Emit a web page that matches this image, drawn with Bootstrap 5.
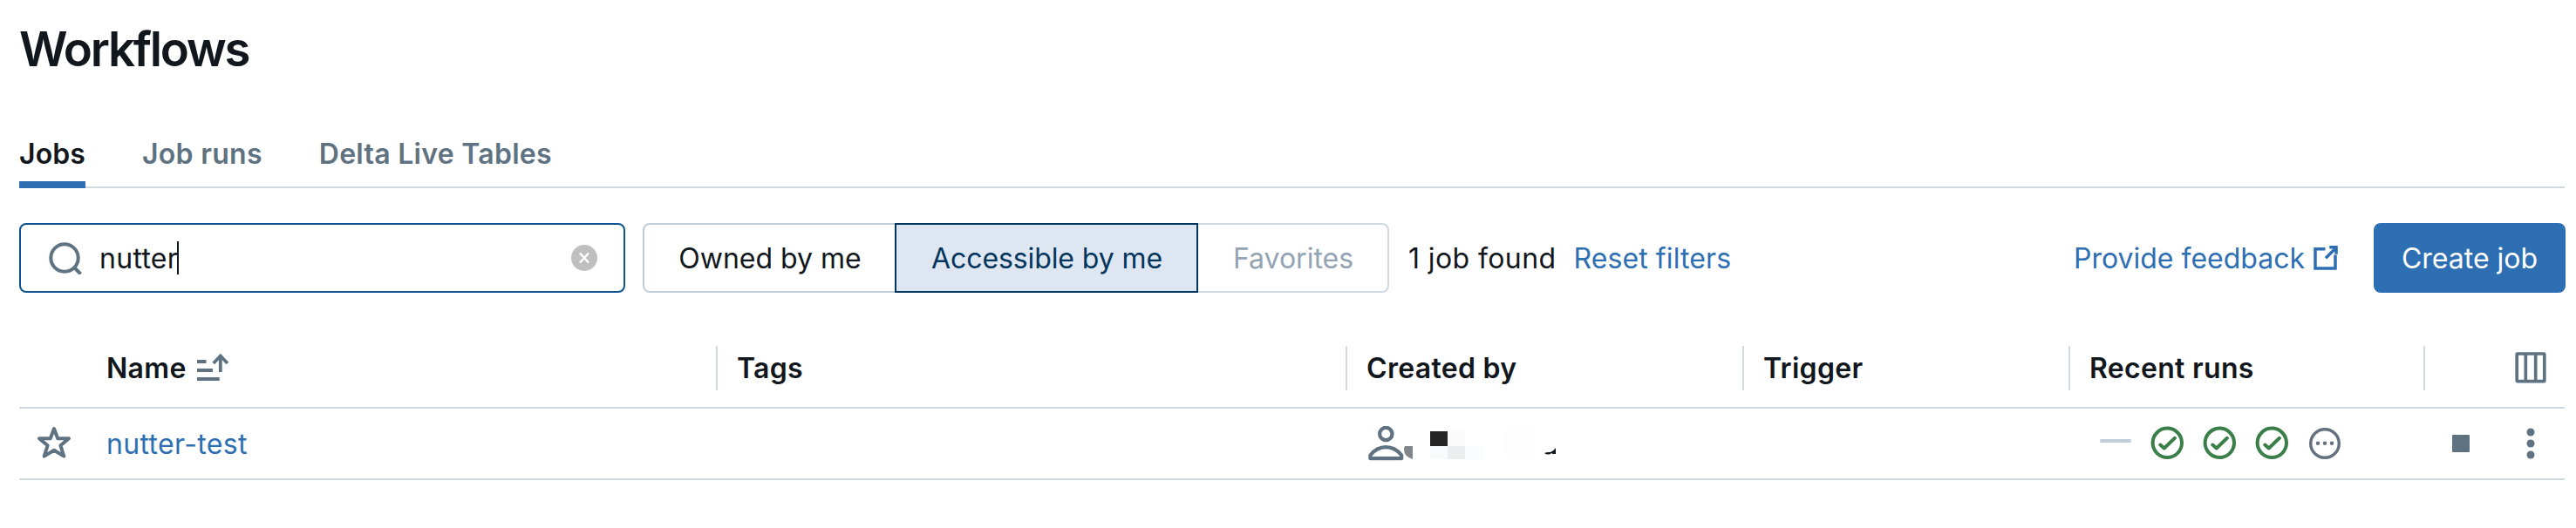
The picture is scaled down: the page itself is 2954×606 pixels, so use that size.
<!DOCTYPE html>
<html lang="en">
<head>
<meta charset="utf-8">
<title>Workflows</title>
<link rel="stylesheet" href="https://cdn.jsdelivr.net/npm/bootstrap@5.3.0/dist/css/bootstrap.min.css">
<style>
body{font-family:Inter,"Liberation Sans",sans-serif;font-size:32px;line-height:48px;color:#11171c;background:#fff;padding:0 12px 0 22px;overflow:hidden}
svg{display:block;flex:none;fill:none}
h1{font-size:54.5px;line-height:64px;font-weight:600;margin:0;padding-top:24px;letter-spacing:-2.2px}
.tabs{height:86px;margin-top:42px;border-bottom:2px solid #d1d9e1;flex-wrap:nowrap;width:2919px}
.tabs .nav-link{position:relative;padding:23px 0 0;height:86px;margin-right:65px;color:#5f7281;font-weight:600;letter-spacing:.28px}
.tabs .nav-link.active{color:#11171c;letter-spacing:.1px}
.tabs .nav-link.active::after{content:"";position:absolute;left:0;right:0;bottom:0;height:8px;background:#2e6fb4}
.tools{height:80px;margin-top:40px;width:2920px}
.search{width:695px;height:80px;border:2px solid #0e538b;border-radius:8px;padding:0 30px 0 32px}
.query{margin-left:20px;letter-spacing:.3px;padding-top:1px}
.caret{width:2px;height:38px;background:#11171c;margin-left:-1px}
.seg{margin-left:20px}
.seg .btn{height:80px;border:2px solid #c0cdd8;border-radius:8px;padding:2px 0 0 1px;font-size:32px;line-height:74px;color:#11171c;background:#fff;flex:none}
.seg .btn+.btn{margin-left:-2px!important}
.seg .owned{width:291px}
.seg .access{width:348px;letter-spacing:-.1px}
.seg .fav{width:221px;color:#93a3b3;border-color:#d1d9e1}
.seg .btn.active{background:#dee7f1;border-color:#04355d;color:#04355d}
.found{margin-left:22px;letter-spacing:.4px;padding-top:1px}
.reset{margin-left:20px;letter-spacing:.1px;padding-top:1px}
.lnk{color:#2e6fb4;text-decoration:none}
.create{width:220px;height:80px;background:#2e6fb4;border-radius:8px;color:#fff;font-size:32px;line-height:74px;padding:2px 0 0;margin-left:41px;border:0}
.jobs{display:grid;grid-template-columns:100px 701px 722px 455px 374px 407px 160px;width:2919px;border-bottom:2px solid #d1d9e1;align-items:center}
.jobs>div{display:flex;align-items:center}
.hd{height:93px;margin-top:40px;font-weight:600;letter-spacing:.3px}
.hd>div{height:51px;margin-top:1px}
.hd span{padding-top:1px}
.hd .ln{border-right:2px solid #d1d9e1}
.bd{height:82px}
.gx{padding-left:22px}
</style>
</head>
<body>
<h1>Workflows</h1>
<nav class="nav tabs">
<a class="nav-link active" href="#">Jobs</a><a class="nav-link" href="#">Job runs</a><a class="nav-link" href="#">Delta Live Tables</a>
</nav>
<div class="tools d-flex align-items-center">
  <div class="search d-flex align-items-center">
    <svg width="38" height="38" stroke="#5f7281" stroke-width="4"><circle cx="18" cy="19" r="15.7"/><path d="M28.5 29.500L36.500 37.500"/></svg>
    <span class="query">nutter</span><span class="caret"></span>
    <svg class="ms-auto" width="30" height="30"><circle cx="15" cy="15" r="15" fill="#bfbfbf"/><path d="M10 9.500l10 11M20 9.500l-10 11" stroke="#fff" stroke-width="2.600"/></svg>
  </div>
  <div class="seg btn-group"><button class="btn owned rounded-end-0">Owned by me</button><button class="btn active access rounded-0">Accessible by me</button><button class="btn fav rounded-start-0">Favorites</button></div>
  <span class="found">1 job found</span><a class="lnk reset" href="#">Reset filters</a>
  <a class="lnk ms-auto d-flex align-items-center" href="#"><span style="padding-top:1px">Provide feedback</span>
    <svg style="margin-left:10px" width="28" height="28" stroke="#2e6fb4" stroke-width="3.500"><path d="M13.500 3.700H2V26H25V10.500M14 14.300L25 3.200"/><path d="M18.300 1.700H26V9.700"/></svg></a>
  <button class="btn create">Create job</button>
</div>
<div class="jobs hd">
  <div></div>
  <div class="ln"><span>Name</span>
    <svg style="margin-left:12px" width="37" height="38" stroke="#5f7281" stroke-width="4"><path d="M0 12H10.500M0 22H18M0 32H25.700"/><path d="M26.800 24V5M18.700 14L26.800 5.500L34.900 14" stroke-width="3.800"/></svg></div>
  <div class="ln gx"><span>Tags</span></div>
  <div class="ln gx"><span>Created by</span></div>
  <div class="ln gx"><span>Trigger</span></div>
  <div class="ln gx"><span>Recent runs</span></div>
  <div class="justify-content-end" style="padding-right:21px"><svg width="36" height="36" stroke="#5f7281" stroke-width="3.700"><rect x="2.200" y="2" width="31.600" height="31.600" rx=".5"/><path d="M12.300 2V33.600M23.700 2V33.600"/></svg></div>
</div>
<div class="jobs bd">
  <div style="padding-left:20px"><svg width="40" height="40" stroke="#5f7281" stroke-width="4" stroke-linejoin="round"><path d="M20 3L24.200 14.300H37L27.400 22.300L31.300 34.600L20 27.700L8.700 34.600L12.600 22.300L3 14.300H15.800Z"/></svg></div>
  <div><a class="lnk" style="letter-spacing:.35px;padding-top:1px" href="#">nutter-test</a></div>
  <div></div>
  <div style="padding-left:24px"><svg width="220" height="40">
    <g stroke="#5f7281" stroke-width="4.200" stroke-linejoin="round"><circle cx="20.300" cy="9" r="7.200"/><path d="M2.400 37.200V33.500C7 27.500 13 24.100 20.300 24.100S33.600 27.500 38.200 33.500V37.200Z"/></g>
    <path d="M51 23H43Q41 23 41 27Q41 35 51 38Z" fill="#828589"/>
    <rect x="71" y="6" width="20" height="17" fill="#262626"/><rect x="91" y="6" width="20" height="17" fill="#fafafa"/>
    <rect x="71" y="23" width="20" height="15" fill="#f9fafd"/><rect x="91" y="23" width="20" height="15" fill="#ecedef"/><rect x="111" y="23" width="22" height="15" fill="#fafcff"/><rect x="153" y="6" width="39" height="26" fill="#fdfdfe"/>
    <path d="M202 31Q205 29.500 209 30Q213 28 215 25V32H211.500L210.500 31Q206 34 202 31Z" fill="#11171c"/></svg></div>
  <div></div>
  <div style="padding-left:34px"><svg width="280" height="40">
    <path d="M.300 17H35.700" stroke="#c0cdd8" stroke-width="4"/>
    <g stroke="#3b7f48" stroke-width="4" stroke-linecap="round" stroke-linejoin="round">
      <g><circle cx="77.300" cy="19.300" r="16.700"/><path d="M69.300 21.500L73.700 25.500L85.900 13.800"/></g>
      <g transform="translate(60)"><circle cx="77.300" cy="19.300" r="16.700"/><path d="M69.300 21.500L73.700 25.500L85.900 13.800"/></g>
      <g transform="translate(120)"><circle cx="77.300" cy="19.300" r="16.700"/><path d="M69.300 21.500L73.700 25.500L85.900 13.800"/></g></g>
    <circle cx="258" cy="20" r="16.300" stroke="#64707f" stroke-width="3.400"/><g fill="#64707f"><circle cx="250" cy="19.700" r="2.200"/><circle cx="258" cy="19.700" r="2.200"/><circle cx="266" cy="19.700" r="2.200"/></g></svg></div>
  <div style="padding-left:31px"><svg width="20" height="20"><rect width="20" height="20" rx="1" fill="#5f7281"/></svg>
    <svg style="margin-left:65px" width="10" height="36"><g fill="#5f7281"><circle cx="5" cy="5" r="4.500"/><circle cx="5" cy="18" r="4.500"/><circle cx="5" cy="31" r="4.500"/></g></svg></div>
</div>
<script src="https://cdn.jsdelivr.net/npm/bootstrap@5.3.0/dist/js/bootstrap.bundle.min.js"></script>
</body>
</html>
